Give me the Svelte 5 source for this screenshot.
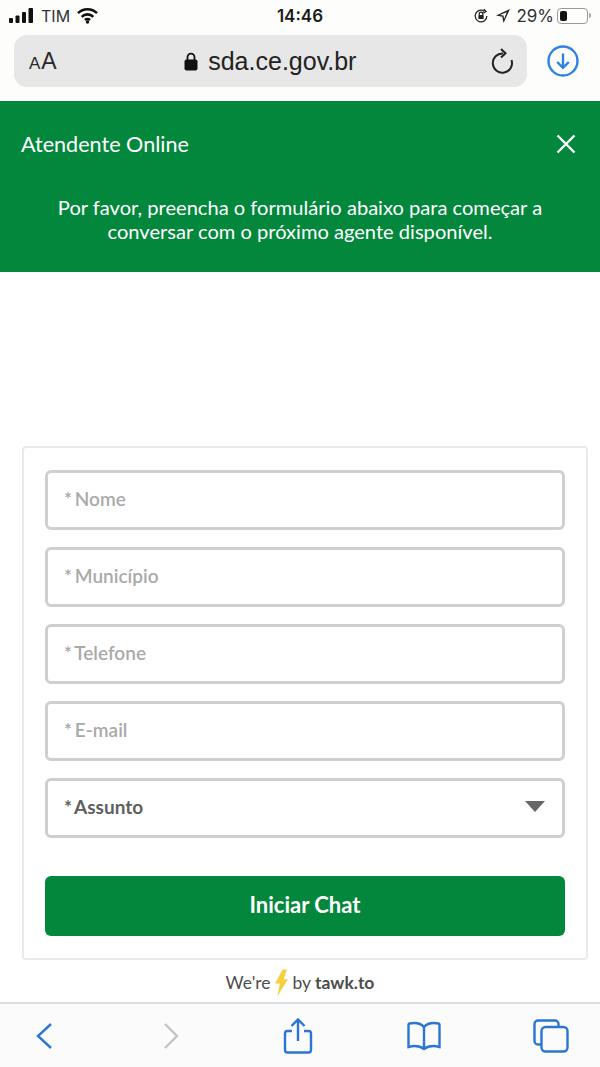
<script>
  const fields = ["Nome", "Município", "Telefone", "E-mail"];
</script>

<div class="phone">
  <header class="safari">
    <div class="status">
      <div class="status-left">
        <svg class="signal" width="25" height="15" viewBox="0 0 25 15">
          <rect x="0" y="10" width="4" height="5" rx="1" />
          <rect x="6.5" y="7.5" width="4" height="7.5" rx="1" />
          <rect x="13" y="4" width="4" height="11" rx="1" />
          <rect x="19.5" y="0" width="4.5" height="15" rx="1" />
        </svg>
        <span class="carrier">TIM</span>
        <svg class="wifi" width="23" height="17" viewBox="0 0 23 17">
          <path d="M2 6.2 A13.5 13.5 0 0 1 21 6.2" />
          <path d="M5.7 9.8 A8.2 8.2 0 0 1 17.3 9.8" />
          <path d="M9 13 A3.6 3.6 0 0 1 14 13" />
          <circle cx="11.5" cy="15" r="1.7" class="dot" />
        </svg>
      </div>
      <div class="time">14:46</div>
      <div class="status-right">
        <svg width="16" height="16" viewBox="0 0 15 15" class="rotation">
          <path d="M13 7.5 A5.5 5.5 0 1 1 10.5 2.9" />
          <path d="M10.2 1 L12.2 3.3 L9.6 4.6" />
          <rect x="5" y="6.5" width="5" height="3.8" rx="0.8" class="fill" />
          <path d="M5.8 6.5 V5.6 A1.7 1.7 0 0 1 9.2 5.6 V6.5" />
        </svg>
        <svg width="16" height="16" viewBox="0 0 15 15"><path class="fill" d="M14 1 L8 14 L6.8 8.2 L1 7 Z M11 4 L4.6 6.5 L8 7 L8.5 10.4 Z" fill-rule="evenodd" /></svg>
        <span class="pct">29%</span>
        <div class="battery"><div class="charge"></div></div>
        <div class="nub"></div>
      </div>
    </div>
    <div class="address-row">
      <div class="address">
        <span class="aa"><small>A</small>A</span>
        <span class="host">
          <svg width="14" height="19" viewBox="0 0 14 19">
            <path d="M3.5 8 V5.2 A3.5 3.5 0 0 1 10.5 5.2 V8" fill="none" stroke="#111" stroke-width="1.8" />
            <rect x="0.5" y="7.5" width="13" height="11" rx="2" fill="#111" />
          </svg>
          sda.ce.gov.br
        </span>
        <svg class="reload" width="24" height="26" viewBox="0 0 24 26">
          <path d="M13 5.5 A9.6 9.6 0 1 0 21.5 12" />
          <path d="M11 1 L15.5 5.3 L11 9.5" />
        </svg>
      </div>
      <svg class="download" width="32" height="32" viewBox="0 0 32 32">
        <circle cx="16" cy="16" r="14.5" />
        <path d="M16 8.5 V22.5 M10.2 17 L16 22.8 L21.8 17" />
      </svg>
    </div>
  </header>

  <section class="banner">
    <div class="banner-top">
      <span class="title">Atendente Online</span>
      <svg width="20" height="20" viewBox="0 0 20 20" class="close">
        <path d="M1.5 1.5 L18.5 18.5 M18.5 1.5 L1.5 18.5" />
      </svg>
    </div>
    <p>Por favor, preencha o formulário abaixo para começar a conversar com o próximo agente disponível.</p>
  </section>

  <main class="content">
    <form class="card">
      {#each fields as f}
        <div class="field"><span>* {f}</span></div>
      {/each}
      <div class="field select">
        <span>* Assunto</span>
        <span class="caret"></span>
      </div>
      <div class="submit">Iniciar Chat</div>
    </form>
    <div class="powered">
      We're
      <svg width="14" height="28" viewBox="0 0 13 25"><path d="M8 0 L12 0 L9 9 L13 9 L3 25 L5.5 13 L1 13 Z" fill="#f6cf3f" /></svg>
      by <b>tawk.to</b>
    </div>
  </main>

  <footer class="toolbar">
    <svg width="36" height="34" viewBox="0 0 30 34" class="blue"><path d="M22 5 L9 17 L22 29" /></svg>
    <svg width="36" height="34" viewBox="0 0 30 34" class="off"><path d="M9 5 L21 17 L9 29" /></svg>
    <svg width="32" height="38" viewBox="0 0 32 38" class="blue">
      <path d="M10 14 H5.5 A2.5 2.5 0 0 0 3 16.5 V33 A2.5 2.5 0 0 0 5.5 35.5 H26.5 A2.5 2.5 0 0 0 29 33 V16.5 A2.5 2.5 0 0 0 26.5 14 H22" />
      <path d="M16 24 V3 M9.5 9 L16 2.5 L22.5 9" />
    </svg>
    <svg width="34" height="30" viewBox="0 0 34 30" class="blue">
      <path d="M17 6 C14 2.5 8 1.5 2.5 2.5 A1.5 1.5 0 0 0 1.5 4 V26 C7 24.5 13 25 17 28 C21 25 27 24.5 32.5 26 V4 A1.5 1.5 0 0 0 31.5 2.5 C26 1.5 20 2.5 17 6 Z M17 6 V28" />
    </svg>
    <svg width="36" height="34" viewBox="0 0 36 34" class="blue">
      <path d="M8 25.5 H5 A3.5 3.5 0 0 1 1.5 22 V5 A3.5 3.5 0 0 1 5 1.5 H22 A3.5 3.5 0 0 1 25.5 5 V8" />
      <rect x="8.5" y="8" width="26" height="24.5" rx="4" />
    </svg>
  </footer>
</div>

<style>
  :global(body) {
    margin: 0;
    background: #fff;
  }
  .phone {
    width: 600px;
    height: 1067px;
    display: flex;
    flex-direction: column;
    font-family: Lato, sans-serif;
    overflow: hidden;
  }
  .safari {
    height: 101px;
    flex: none;
    background: #fdfdfc;
    font-family: Inter, "Liberation Sans", sans-serif;
  }
  .status {
    height: 31px;
    padding: 0 9px;
    display: grid;
    grid-template-columns: 1fr auto 1fr;
    align-items: center;
    color: #1a1a1a;
  }
  .status-left, .status-right {
    display: flex;
    align-items: center;
  }
  .status-left { gap: 7px; }
  .status-right { justify-content: flex-end; gap: 6px; }
  .signal { fill: #111; }
  .carrier { font-size: 16px; color: #333; margin-right: 0; }
  .wifi { fill: none; stroke: #111; stroke-width: 2.6; margin-left: -1px; }
  .wifi .dot { fill: #111; stroke: none; }
  .time { font-size: 17px; font-weight: 600; }
  .rotation { fill: none; stroke: #222; stroke-width: 1.2; }
  .rotation .fill { fill: #222; stroke: none; }
  .fill { fill: #222; }
  .pct { font-size: 17px; color: #333; margin-left: -1px; }
  .battery {
    width: 25px;
    height: 10px;
    border: 1px solid #999;
    border-radius: 4px;
    padding: 2px;
    box-sizing: content-box;
    margin-left: -3px;
  }
  .charge {
    width: 7px;
    height: 100%;
    background: #111;
    border-radius: 2px;
  }
  .nub {
    width: 2px;
    height: 5px;
    background: #aaa;
    margin-left: -5px;
    border-radius: 0 2px 2px 0;
  }
  .address-row {
    display: flex;
    align-items: center;
    padding: 4px 21px 0 14px;
    justify-content: space-between;
  }
  .address {
    width: 513px;
    height: 52px;
    background: #e7e7e7;
    border-radius: 13px;
    display: flex;
    align-items: center;
    padding: 0 13px 0 15px;
    box-sizing: border-box;
    position: relative;
  }
  .aa {
    font-size: 23px;
    color: #2a2a2a;
    font-family: "Liberation Sans", sans-serif;
  }
  .aa small { font-size: 17px; margin-right: 1px; }
  .host {
    flex: 1;
    display: flex;
    justify-content: center;
    align-items: center;
    gap: 10px;
    font-size: 25px;
    color: #222;
    font-family: "Liberation Sans", sans-serif;
    padding-right: 6px;
  }
  .reload { fill: none; stroke: #222; stroke-width: 2; }
  .download { fill: none; stroke: #2f80e0; stroke-width: 2.4; }
  .banner {
    height: 171px;
    flex: none;
    background: #03873c;
    color: #fff;
    padding: 0 20px;
    box-sizing: border-box;
  }
  .banner-top {
    height: 86px;
    display: flex;
    justify-content: space-between;
    align-items: center;
  }
  .title { font-size: 21.6px; padding-left: 1px; }
  .close { fill: none; stroke: #fff; stroke-width: 2.4; margin-right: 4px; }
  .banner p {
    margin: 8px 0 0;
    padding: 0 9px;
    text-align: center;
    font-size: 20.1px;
    line-height: 24px;
  }
  .content {
    flex: 1;
    min-height: 0;
    padding: 174px 12px 0 22px;
    display: flex;
    flex-direction: column;
  }
  .card {
    flex: none;
    height: 514px;
    box-sizing: border-box;
    border: 2px solid #eaeaea;
    border-radius: 4px;
    padding: 22px 21px;
    display: flex;
    flex-direction: column;
    gap: 17px;
  }
  .field {
    height: 60px;
    flex: none;
    box-sizing: border-box;
    border: 3px solid #cfcfcf;
    border-radius: 6px;
    padding: 0 16px 4px;
    display: flex;
    align-items: center;
    font-size: 19px;
    font-weight: 600;
    color: #a9a9a9;
    white-space: pre;
    word-spacing: -2px;
  }
  .select {
    justify-content: space-between;
    color: #5f5f5f;
    font-weight: 700;
    padding-bottom: 3px;
  }
  .caret {
    width: 0;
    height: 0;
    border-left: 10px solid transparent;
    border-right: 10px solid transparent;
    border-top: 11px solid #666;
    margin: 0 1px 0 0;
  }
  .submit {
    margin-top: 21px;
    height: 60px;
    flex: none;
    box-sizing: border-box;
    padding-bottom: 3px;
    background: #03873c;
    border-radius: 6px;
    color: #fff;
    font-size: 22px;
    font-weight: 700;
    display: flex;
    align-items: center;
    justify-content: center;
  }
  .powered {
    flex: 1;
    display: flex;
    align-items: center;
    justify-content: center;
    gap: 4px;
    font-size: 17.5px;
    color: #4c4c4c;
    padding: 3px 10px 0 0;
  }
  .powered b { font-weight: 700; }
  .toolbar {
    height: 65px;
    flex: none;
    box-sizing: border-box;
    background: #fbfbfb;
    border-top: 2px solid #dedede;
    display: grid;
    grid-template-columns: repeat(5, 36px);
    justify-content: space-between;
    justify-items: center;
    align-items: center;
    padding: 0 31px 0 26px;
  }
  .toolbar svg { fill: none; stroke-width: 2.4; }
  .blue { stroke: #2a76d2; }
  .off { stroke: #c4c4c4; }
</style>
